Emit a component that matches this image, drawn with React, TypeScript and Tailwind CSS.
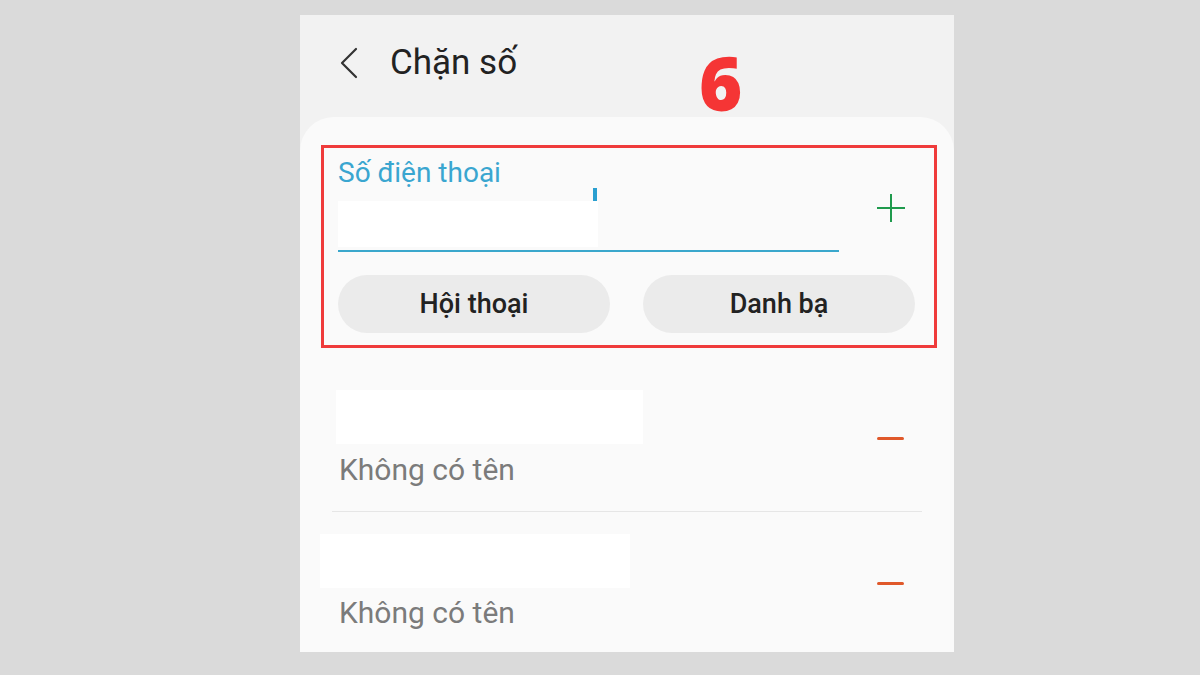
const font = { fontFamily: "Roboto, 'Noto Sans', sans-serif" };

function Minus({ top }: { top: string }) {
  return <div className={`mr-[18px] h-[3px] w-[27px] rounded-full bg-[#e0582a] ${top}`} />;
}

function BlockedRow({
  redactClass,
  textGap,
  minusTop,
  divider,
}: {
  redactClass: string;
  textGap: string;
  minusTop: string;
  divider?: boolean;
}) {
  return (
    <div className={`flex h-[164px] shrink-0 items-start ${divider ? "border-b border-[#e6e6e6]" : ""}`}>
      <div className="flex flex-1 flex-col">
        <div className={`h-[54px] bg-white ${redactClass}`} />
        <div className={`${textGap} pl-[7px] text-[30px] leading-[34px] text-[#7b7b7b]`}>Không có tên</div>
      </div>
      <Minus top={minusTop} />
    </div>
  );
}

export default function App() {
  return (
    <div className="h-[675px] w-[1200px] bg-[#dadada] pt-[15px]" style={font}>
      <div className="relative ml-[300px] flex h-[637px] w-[654px] flex-col overflow-hidden bg-[#f2f2f2]">
        {/* header */}
        <div className="flex h-[102px] shrink-0 items-start pl-[40px] pt-[28px]">
          <svg width="18" height="32" viewBox="0 0 18 32" className="mt-[4px]">
            <path d="M16 2 L2 16 L16 30" stroke="#333" strokeWidth="2.2" fill="none" strokeLinecap="round" strokeLinejoin="round" />
          </svg>
          <div className="ml-[32px] text-[35px] leading-[40px] text-[#222]">Chặn số</div>
        </div>
        <div
          className="absolute left-[399px] top-[31px] text-[74px] font-extrabold leading-none text-[#f53535]"
          style={{ fontFamily: "'Open Sans', sans-serif" }}
        >
          6
        </div>

        {/* card */}
        <div className="flex min-h-0 flex-1 flex-col rounded-t-[34px] bg-[#fafafa] px-[21px] pt-[28px]">
          <div className="mr-[-4px] h-[203px] shrink-0 border-[3px] border-[#ef3b3b] pl-[14px] pr-[19px]">
            <div className="flex">
              <div className="w-[501px]">
                <div className="mt-[9px] text-[28px] leading-[32px] text-[#3aa6d0]">Số điện thoại</div>
                <div className="relative mt-[11px] h-[47px]">
                  <div className="absolute left-0 top-[1px] h-[46px] w-[260px] bg-white" />
                  <div className="absolute left-[255px] top-[-12px] h-[13px] w-[4px] bg-[#2a9fd0]" />
                </div>
                <div className="mt-[3px] h-[2px] bg-[#3aa7cc]" />
              </div>
              <div className="ml-[37px] mt-[45px]">
                <svg width="30" height="30" viewBox="0 0 30 30">
                  <path d="M15 1v28M1 15h28" stroke="#1f9a4d" strokeWidth="2" fill="none" />
                </svg>
              </div>
            </div>
            <div className="mt-[23px] flex gap-[33px]">
              <div className="flex h-[58px] w-[272px] items-center justify-center rounded-full bg-[#ebebeb] text-[27px] font-medium text-[#222]">
                Hội thoại
              </div>
              <div className="flex h-[58px] w-[272px] items-center justify-center rounded-full bg-[#ebebeb] text-[27px] font-medium text-[#222]">
                Danh bạ
              </div>
            </div>
          </div>

          <div className="mx-[11px]">
            <BlockedRow redactClass="ml-[4px] w-[307px] mt-[42px]" textGap="mt-[9px]" minusTop="mt-[89px]" divider />
            <BlockedRow redactClass="ml-[-12px] w-[310px] mt-[22px]" textGap="mt-[8px]" minusTop="mt-[70px]" />
          </div>
        </div>
      </div>
    </div>
  );
}
